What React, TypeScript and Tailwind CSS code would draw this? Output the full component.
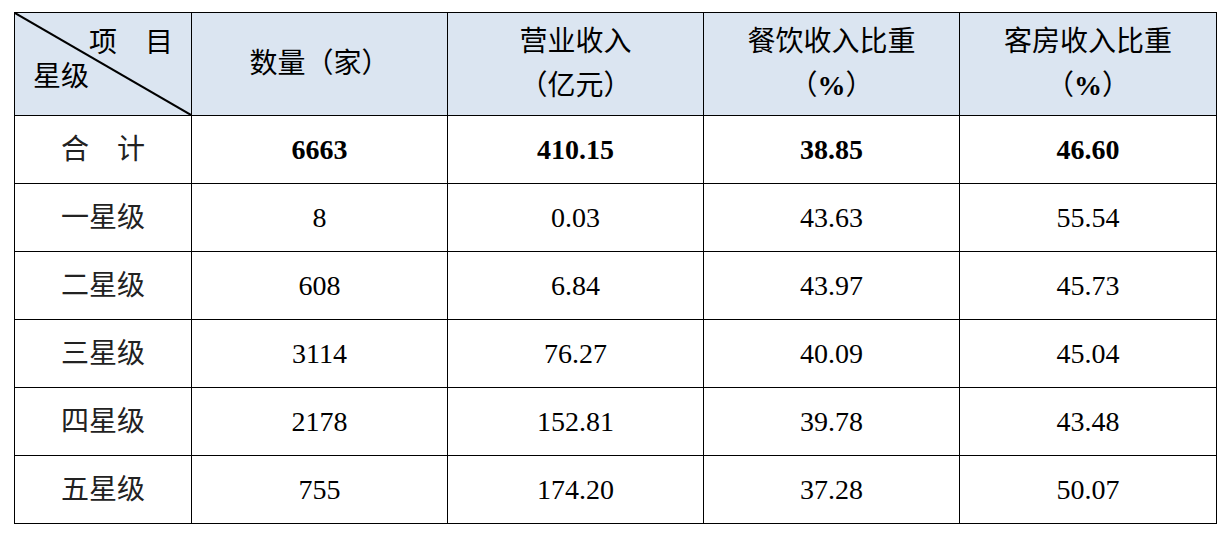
const serif = "font-[family-name:'Liberation_Serif','Noto_Sans_CJK_SC',serif]"

type Row = { label: string; count: string; revenue: string; food: string; room: string; bold?: boolean }

const rows: Row[] = [
  { label: '合　计', count: '6663', revenue: '410.15', food: '38.85', room: '46.60', bold: true },
  { label: '一星级', count: '8', revenue: '0.03', food: '43.63', room: '55.54' },
  { label: '二星级', count: '608', revenue: '6.84', food: '43.97', room: '45.73' },
  { label: '三星级', count: '3114', revenue: '76.27', food: '40.09', room: '45.04' },
  { label: '四星级', count: '2178', revenue: '152.81', food: '39.78', room: '43.48' },
  { label: '五星级', count: '755', revenue: '174.20', food: '37.28', room: '50.07' },
]

export default function App() {
  return (
    <div className={`min-h-screen bg-white pt-[12px] pl-[14px] ${serif}`}>
      <table className={`table-fixed border-collapse text-[28px] text-black ${serif}`}>
        <colgroup>
          <col className="w-[177px]" />
          <col className="w-[256px]" />
          <col className="w-[256px]" />
          <col className="w-[256px]" />
          <col className="w-[257px]" />
        </colgroup>
        <thead>
          <tr className="h-[103px] bg-[#dbe5f1]">
            <th className="relative border border-black p-0 font-normal">
              <svg className="absolute inset-0 h-full w-full" preserveAspectRatio="none" viewBox="0 0 100 100">
                <line x1="0" y1="0" x2="100" y2="100" stroke="#000" strokeWidth="2" vectorEffect="non-scaling-stroke" />
              </svg>
              <div className="flex h-full flex-col justify-between pt-[6px] pb-[14px] leading-[34px]">
                <span className="self-end pr-[18px]">项　目</span>
                <span className="self-start pl-[18px]">星级</span>
              </div>
            </th>
            <th className="border border-black font-normal">数量（家）</th>
            <th className="border border-black font-normal leading-[44px]">
              营业收入
              <br />
              （亿元）
            </th>
            <th className="border border-black font-normal leading-[44px]">
              餐饮收入比重
              <br />
              （<span className="font-bold">%</span>）
            </th>
            <th className="border border-black font-normal leading-[44px]">
              客房收入比重
              <br />
              （<span className="font-bold">%</span>）
            </th>
          </tr>
        </thead>
        <tbody>
          {rows.map((r) => (
            <tr key={r.label} className="h-[68px] text-center">
              <td className="border border-black text-[#222]">{r.label}</td>
              <td className={`border border-black ${r.bold ? 'font-bold' : ''}`}>{r.count}</td>
              <td className={`border border-black ${r.bold ? 'font-bold' : ''}`}>{r.revenue}</td>
              <td className={`border border-black ${r.bold ? 'font-bold' : ''}`}>{r.food}</td>
              <td className={`border border-black ${r.bold ? 'font-bold' : ''}`}>{r.room}</td>
            </tr>
          ))}
        </tbody>
      </table>
    </div>
  )
}
